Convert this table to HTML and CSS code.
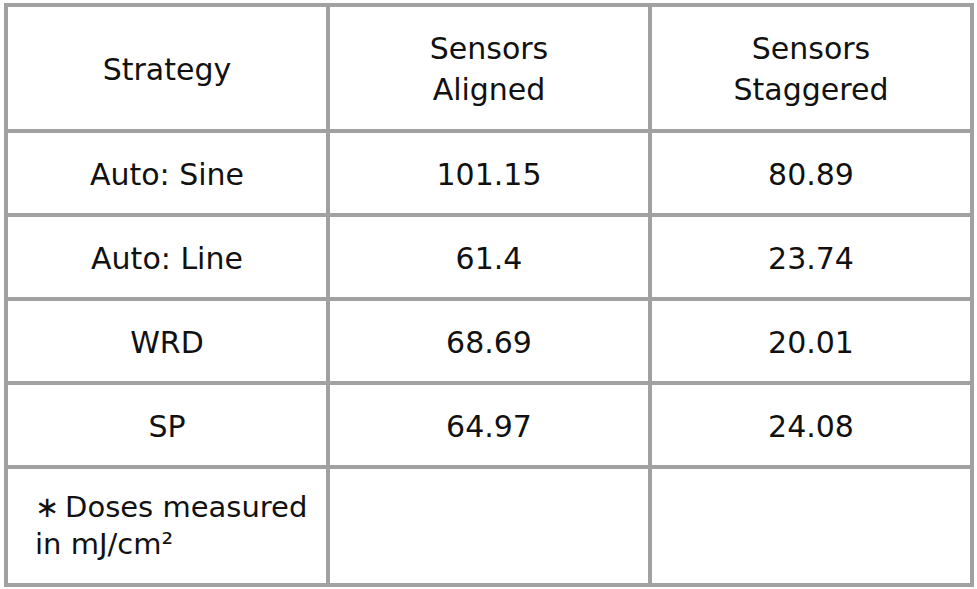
FILE: index.html
```html
<!DOCTYPE html>
<html>
<head>
<meta charset="utf-8">
<link rel="stylesheet" href="styles.css">
</head>
<body>
<table class="dose-table">
  <tbody>
    <tr class="head-row">
      <td>Strategy</td>
      <td>Sensors<br>Aligned</td>
      <td>Sensors<br>Staggered</td>
    </tr>
    <tr class="data-row">
      <td>Auto: Sine</td>
      <td>101.15</td>
      <td>80.89</td>
    </tr>
    <tr class="data-row">
      <td>Auto: Line</td>
      <td>61.4</td>
      <td>23.74</td>
    </tr>
    <tr class="data-row">
      <td>WRD</td>
      <td>68.69</td>
      <td>20.01</td>
    </tr>
    <tr class="data-row">
      <td>SP</td>
      <td>64.97</td>
      <td>24.08</td>
    </tr>
    <tr class="note-row">
      <td class="note">∗&#8201;Doses measured in mJ/cm²</td>
      <td></td>
      <td></td>
    </tr>
  </tbody>
</table>
</body>
</html>
```
FILE: styles.css
```css
html, body {
  margin: 0;
  padding: 0;
  background: #ffffff;
}

.dose-table {
  margin: 3px 0 0 4px;
  border-collapse: separate;
  border-spacing: 0;
  table-layout: fixed;
  border-top: 4px solid #a1a1a1;
  border-left: 4px solid #a1a1a1;
  font-family: "DejaVu Sans", "Liberation Sans", sans-serif;
  font-weight: 400;
  font-size: 30px;
  color: #111111;
}

.dose-table td {
  width: 318px;
  padding: 0;
  border-right: 4px solid #a1a1a1;
  border-bottom: 4px solid #a1a1a1;
  text-align: center;
  vertical-align: middle;
}

.head-row td {
  height: 120px;
  padding-top: 2px;
  line-height: 41px;
}

.data-row td {
  height: 77px;
  padding-top: 3px;
  line-height: 40px;
}

.note-row td {
  height: 114px;
  line-height: 37px;
}

.dose-table td.note {
  text-align: left;
  padding: 0 10px 0 27px;
  width: 281px;
  font-size: 29px;
}
```
